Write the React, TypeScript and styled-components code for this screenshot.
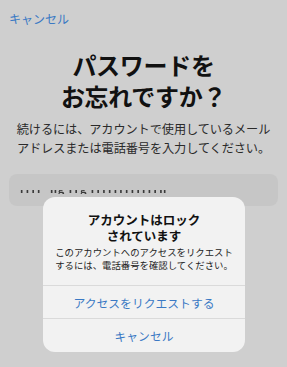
import React from 'react';
import styled, { createGlobalStyle } from 'styled-components';

const GlobalStyle = createGlobalStyle`
    html, body {
        margin: 0;
        padding: 0;
        background: #cfcfcf;
    }
    body {
        font-family: 'Noto Sans CJK JP', 'Noto Sans', sans-serif;
        -webkit-font-smoothing: antialiased;
    }
`;

export default function App() {
    return (
        <>
            <GlobalStyle />
            <StyledScreen>
                <TopBar>
                    <TextLink>キャンセル</TextLink>
                </TopBar>
                <Title>
                    パスワードを
                    <br />
                    お忘れですか？
                </Title>
                <Lead>
                    続けるには、アカウントで使用しているメール
                    <br />
                    アドレスまたは電話番号を入力してください。
                </Lead>
                <Field>
                    <FieldClip>
                        <span>rrrr_ng rrg rrrrrrrrrrrrn</span>
                    </FieldClip>
                </Field>
                <Alert role="alertdialog">
                    <AlertBody>
                        <AlertTitle>
                            アカウントはロック
                            <br />
                            されています
                        </AlertTitle>
                        <AlertMessage>
                            このアカウントへのアクセスをリクエスト
                            <br />
                            するには、電話番号を確認してください。
                        </AlertMessage>
                    </AlertBody>
                    <AlertButton>アクセスをリクエストする</AlertButton>
                    <AlertButton last>キャンセル</AlertButton>
                </Alert>
            </StyledScreen>
        </>
    );
}

const StyledScreen = styled.main`
    position: relative;
    width: 287px;
    height: 367px;
    overflow: hidden;
    display: flex;
    flex-direction: column;
    background: #cfcfcf;
`;

const TopBar = styled.div`
    display: flex;
    padding: 10px 9px 0;
    height: 20px;
`;

const TextLink = styled.span`
    font-size: 12px;
    line-height: 18px;
    color: #3a79c4;
`;

const Title = styled.h1`
    margin: 19px 0 0;
    text-align: center;
    font-size: 24px;
    line-height: 31px;
    font-weight: 700;
    color: #111;
    letter-spacing: -0.3px;
`;

const Lead = styled.p`
    margin: 9px 0 0;
    text-align: center;
    font-size: 12.2px;
    line-height: 19px;
    color: #2a2a2a;
    letter-spacing: -0.1px;
`;

const Field = styled.div`
    margin: 16px 9px 0;
    height: 32px;
    border-radius: 8px;
    background: #c6c6c6;
    display: flex;
    align-items: center;
    padding: 0 11px;
`;

const FieldClip = styled.div`
    height: 4px;
    margin-top: 4px;
    overflow: hidden;
    display: flex;
    align-items: flex-end;

    span {
        font-size: 11px;
        line-height: 11px;
        font-weight: 700;
        color: #3a3a3a;
        letter-spacing: 0.9px;
        white-space: nowrap;
        filter: blur(0.3px);
    }
`;

const Alert = styled.section`
    position: absolute;
    left: 43px;
    top: 197px;
    width: 202px;
    border-radius: 12px;
    background: #f2f2f2;
    overflow: hidden;
    display: flex;
    flex-direction: column;
`;

const AlertBody = styled.div`
    padding: 15px 10px 13px;
    text-align: center;
`;

const AlertTitle = styled.h2`
    margin: 0;
    font-size: 12.5px;
    line-height: 16px;
    font-weight: 700;
    color: #111;
`;

const AlertMessage = styled.p`
    margin: 2px 0 0;
    font-size: 9.4px;
    line-height: 13px;
    color: #222;
`;

const AlertButton = styled.button<{ last?: boolean }>`
    height: ${({ last }) => (last ? '34px' : '33px')};
    border: 0;
    border-top: 1px solid #dadada;
    background: transparent;
    font-family: inherit;
    font-size: 11.8px;
    color: #3a79c4;
    padding: 0;
    cursor: pointer;
`;
